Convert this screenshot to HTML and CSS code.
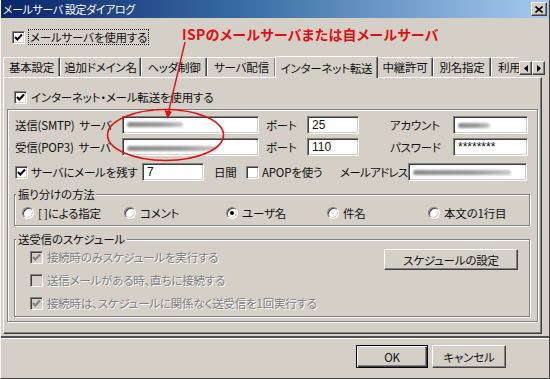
FILE: index.html
```html
<!DOCTYPE html>
<html lang="ja">
<head>
<meta charset="utf-8">
<title>メールサーバ 設定ダイアログ</title>
<link rel="stylesheet" href="styles.css">
</head>
<body>
<div class="window">
  <div class="titlebar">
    <span class="title">メールサーバ 設定ダイアログ</span>
    <span class="close"><svg width="8" height="7" viewBox="0 0 8 7"><path d="M0.5 0.5 L7.5 6.5 M7.5 0.5 L0.5 6.5" stroke="#000" stroke-width="1.6" fill="none"/></svg></span>
  </div>
  <div class="content">
    <div class="check-row top-check">
      <span class="cb"><svg width="9" height="9" viewBox="0 0 9 9"><path d="M1 4 L3.3 6.5 L8 1.5" stroke="#000" stroke-width="2" fill="none"/></svg></span>
      <span class="focus">メールサーバを使用する</span>
    </div>
    <div class="tabs">
      <div class="tab t1">基本設定</div>
      <div class="tab t2">追加ドメイン名</div>
      <div class="tab t3">ヘッダ制御</div>
      <div class="tab t4">サーバ配信</div>
      <div class="tab active">インターネット転送</div>
      <div class="tab t6">中継許可</div>
      <div class="tab t7">別名指定</div>
      <div class="tab t8">利用</div>
      <div class="scroller">
        <span class="arrow"><svg width="4" height="7" viewBox="0 0 4 7"><path d="M4 0 L0 3.5 L4 7 Z" fill="#000"/></svg></span>
        <span class="arrow"><svg width="4" height="7" viewBox="0 0 4 7"><path d="M0 0 L4 3.5 L0 7 Z" fill="#000"/></svg></span>
      </div>
    </div>
    <div class="panel">
      <div class="check-row use-row">
        <span class="cb"><svg width="9" height="9" viewBox="0 0 9 9"><path d="M1 4 L3.3 6.5 L8 1.5" stroke="#000" stroke-width="2" fill="none"/></svg></span>
        <span>インターネット・メール転送を使用する</span>
      </div>
      <div class="frame">
        <div class="row">
          <span class="lbl-server">送信(SMTP)&nbsp; サーバ</span>
          <span class="input w-server"><span class="smudge s1"></span></span>
          <span class="lbl-port">ポート</span>
          <span class="input w-port">25</span>
          <span class="lbl-acct">アカウント</span>
          <span class="input w-acct"><span class="smudge s3"></span></span>
        </div>
        <div class="row row2">
          <span class="lbl-server">受信(POP3)&nbsp; サーバ</span>
          <span class="input w-server"><span class="smudge s2"></span></span>
          <span class="lbl-port">ポート</span>
          <span class="input w-port">110</span>
          <span class="lbl-acct">パスワード</span>
          <span class="input w-acct">********</span>
        </div>
        <div class="row row3">
          <span class="cb"><svg width="9" height="9" viewBox="0 0 9 9"><path d="M1 4 L3.3 6.5 L8 1.5" stroke="#000" stroke-width="2" fill="none"/></svg></span>
          <span class="lbl-keep">サーバにメールを残す</span>
          <span class="input w-days">7</span>
          <span class="lbl-days">日間</span>
          <span class="cb"></span>
          <span class="lbl-apop">APOPを使う</span>
          <span class="lbl-addr">メールアドレス</span>
          <span class="input w-addr"><span class="smudge s4"></span></span>
        </div>
        <fieldset class="group sort">
          <legend>振り分けの方法</legend>
          <div class="radios">
            <span class="radio-item"><span class="radio"></span>[ ]による指定</span>
            <span class="radio-item"><span class="radio"></span>コメント</span>
            <span class="radio-item"><span class="radio on"></span>ユーザ名</span>
            <span class="radio-item"><span class="radio"></span>件名</span>
            <span class="radio-item"><span class="radio"></span>本文の1行目</span>
          </div>
        </fieldset>
        <fieldset class="group sched">
          <legend>送受信のスケジュール</legend>
          <div class="sched-body">
            <div class="sched-list">
              <div class="check-row disabled">
                <span class="cb dis"><svg width="9" height="9" viewBox="0 0 9 9"><path d="M1 4 L3.3 6.5 L8 1.5" stroke="#808080" stroke-width="2" fill="none"/></svg></span>
                <span>接続時のみスケジュールを実行する</span>
              </div>
              <div class="check-row disabled">
                <span class="cb dis"></span>
                <span>送信メールがある時、直ちに接続する</span>
              </div>
              <div class="check-row disabled">
                <span class="cb dis"><svg width="9" height="9" viewBox="0 0 9 9"><path d="M1 4 L3.3 6.5 L8 1.5" stroke="#808080" stroke-width="2" fill="none"/></svg></span>
                <span>接続時は、スケジュールに関係なく送受信を1回実行する</span>
              </div>
            </div>
            <button class="btn sched-btn">スケジュールの設定</button>
          </div>
        </fieldset>
      </div>
    </div>
    <div class="separator"></div>
    <div class="buttons">
      <button class="btn default ok">OK</button>
      <button class="btn cancel">キャンセル</button>
    </div>
  </div>
  <div class="annot">
    <svg class="annot-svg" width="550" height="379" viewBox="0 0 550 379">
      <ellipse cx="165.5" cy="135" rx="58" ry="25.5" fill="none" stroke="#e01010" stroke-width="1.6"/>
      <line x1="185" y1="42" x2="168.5" y2="112" stroke="#e01010" stroke-width="1.4"/>
      <path d="M164.5 110 L172 111.8 L167.5 119 Z" fill="#e01010"/>
    </svg>
    <span class="annot-text">ISPのメールサーバまたは自メールサーバ</span>
  </div>
</div>
</body>
</html>
```

FILE: styles.css
```css
* { box-sizing: border-box; }

body {
  margin: 0;
  background: #d4d0c8;
  font-family: "Noto Sans CJK JP", "Noto Sans", sans-serif;
  font-size: 11.5px;
  line-height: 14px;
  letter-spacing: -0.2px;
  font-feature-settings: "palt";
  color: #111;
  white-space: nowrap;
}

.window {
  position: relative;
  width: 550px;
  height: 379px;
  background: #d4d0c8;
  border-left: 1px solid #f4f4f4;
  border-right: 1px solid #404040;
  border-bottom: 1px solid #404040;
  overflow: hidden;
}

/* title bar */
.titlebar {
  height: 18px;
  display: flex;
  align-items: center;
  justify-content: space-between;
  padding: 0 2px 0 2px;
  background: linear-gradient(to right, #0a246a 0%, #3a6ea5 45%, #a6caf0 100%);
  color: #fff;
}
.title { font-size: 11px; letter-spacing: -0.4px; }
.close {
  width: 16px;
  height: 14px;
  display: flex;
  align-items: center;
  justify-content: center;
  background: #d4d0c8;
  border: 1px solid;
  border-color: #fff #404040 #404040 #fff;
  box-shadow: inset -1px -1px #808080;
}

.content {
  display: flex;
  flex-direction: column;
  padding: 0 7px 0 2px;
}

/* checkbox */
.check-row {
  display: flex;
  align-items: center;
  height: 16px;
  gap: 4px;
}
.cb {
  width: 13px;
  height: 13px;
  flex: none;
  display: flex;
  align-items: center;
  justify-content: center;
  background: #fff;
  border: 1px solid;
  border-color: #808080 #fff #fff #808080;
  box-shadow: inset 1px 1px #404040, inset -1px -1px #d4d0c8;
}
.cb.dis { background: #d4d0c8; }

.top-check {
  margin-top: 11px;
  padding-left: 9px;
  gap: 3px;
}
.focus {
  border: 1px dotted #000;
  padding: 0 1px;
  line-height: 14px;
}

/* tabs */
.tabs {
  margin-top: 10px;
  height: 22px;
  display: flex;
  align-items: flex-end;
}
.tab {
  height: 19px;
  margin-bottom: 1px;
  display: flex;
  align-items: center;
  justify-content: center;
  overflow: hidden;
  border-top: 1px solid #fff;
  border-left: 1px solid #fff;
  border-right: 1px solid #404040;
  box-shadow: inset -1px 0 #808080;
  border-radius: 2px 2px 0 0;
  flex: none;
}
.t1 { width: 57px; }
.t2 { width: 81px; }
.t3 { width: 66px; }
.t4 { width: 69px; }
.t6 { width: 56px; }
.t7 { width: 58px; }
.t8 { width: 28px; justify-content: flex-start; padding-left: 6px; border-right: none; box-shadow: none; }
.tab.active {
  width: 103px;
  height: 22px;
  margin-bottom: -1px;
  position: relative;
  z-index: 2;
  background: #d4d0c8;
  margin-left: -1px;
  margin-right: -1px;
}
.scroller {
  display: flex;
  align-self: flex-start;
  margin-top: 6px;
}
.arrow {
  width: 13px;
  height: 14px;
  display: flex;
  align-items: center;
  justify-content: center;
  border: 1px solid;
  border-color: #fff #404040 #404040 #fff;
  box-shadow: inset -1px -1px #808080;
}

/* panel */
.panel {
  height: 257px;
  border: 1px solid;
  border-color: #fff #404040 #404040 #fff;
  box-shadow: inset -1px -1px #808080;
  padding: 0 3px;
  display: flex;
  flex-direction: column;
}
.use-row {
  margin-top: 11px;
  padding-left: 7px;
  gap: 4px;
}

.frame {
  margin-top: 4px;
  border: 1px solid #808080;
  box-shadow: inset 1px 1px #fff, 1px 1px #fff;
  padding: 6px 0 4px 7px;
}

.row {
  display: flex;
  align-items: center;
  height: 18px;
}
.row2 { margin-top: 4px; }
.row3 { margin-top: 7px; }

.input {
  height: 18px;
  flex: none;
  display: flex;
  align-items: center;
  padding-left: 4px;
  background: #fff;
  border: 1px solid;
  border-color: #808080 #fff #fff #808080;
  box-shadow: inset 1px 1px #404040, inset -1px -1px #d4d0c8;
  font-family: "Liberation Sans", sans-serif;
  font-size: 12px;
  letter-spacing: 0;
}
.lbl-server { width: 107px; flex: none; overflow: hidden; }
.w-server { width: 137px; }
.lbl-port { width: 48px; padding-left: 7px; flex: none; }
.w-port { width: 52px; }
.lbl-acct { width: 94px; padding-left: 31px; flex: none; }
.w-acct { width: 75px; }

.lbl-keep { width: 114px; padding-left: 3px; flex: none; }
.w-days { width: 62px; }
.lbl-days { width: 42px; padding-left: 10px; flex: none; }
.lbl-apop { width: 81px; padding-left: 3px; flex: none; }
.lbl-addr { width: 68px; flex: none; letter-spacing: -0.7px; }
.w-addr { width: 119px; }

.smudge {
  display: block;
  height: 5px;
  border-radius: 3px;
  background: linear-gradient(to right, #8a8a8a, #9a9a9a 60%, #c8c8c8);
  filter: blur(1.2px);
}
.s1 { width: 56px; margin-top: -1px; }
.s2 { width: 90px; margin-top: 2px; }
.s3 { width: 32px; }
.s4 { width: 98px; margin-top: 1px; }

/* group boxes */
.group {
  margin: 0 7px 0 -1px;
  padding: 0;
  border: 1px solid #808080;
  box-shadow: inset 1px 1px #fff, 1px 1px #fff;
  min-width: 0;
}
.group legend {
  margin-left: 1px;
  padding: 0 2px;
  line-height: 14px;
  background: #d4d0c8;
}
.sort { margin-top: 6px; }
.radios {
  display: grid;
  grid-template-columns: 102px 102px 101px 101px auto;
  padding: 5px 0 5px 7px;
  height: 24px;
  align-items: center;
}
.radio-item {
  display: flex;
  align-items: center;
  gap: 4px;
  height: 14px;
}
.radio {
  width: 12px;
  height: 12px;
  flex: none;
  border-radius: 50%;
  background: #fff;
  border: 1px solid;
  border-color: #808080 #fff #fff #808080;
  box-shadow: inset 1px 1px #404040, inset -1px -1px #d4d0c8;
  display: flex;
  align-items: center;
  justify-content: center;
}
.radio.on::after {
  content: "";
  width: 4px;
  height: 4px;
  border-radius: 50%;
  background: #000;
}

.sched { margin-top: 6px; }
.sched-body {
  display: flex;
  justify-content: space-between;
  align-items: flex-start;
  padding: 3px 11px 5px 15px;
}
.sched-list {
  display: flex;
  flex-direction: column;
  gap: 7px;
}
.disabled {
  color: #808080;
  text-shadow: 1px 1px 0 #fff;
  gap: 4px;
}

/* buttons */
.btn {
  font-family: "Noto Sans CJK JP", "Noto Sans", sans-serif;
  font-feature-settings: "palt";
  font-size: 11.5px;
  letter-spacing: -0.2px;
  line-height: 14px;
  color: #111;
  background: #d4d0c8;
  border: 1px solid;
  border-color: #fff #404040 #404040 #fff;
  box-shadow: inset -1px -1px #808080;
  padding: 0;
  margin: 0;
}
.sched-btn {
  width: 134px;
  height: 21px;
}
.separator {
  margin: 2px -7px 0 -3px;
  background: #505050;
  border-bottom: 1px solid #fff;
  height: 3px;
}
.buttons {
  display: flex;
  justify-content: flex-end;
  gap: 4px;
  margin-top: 6px;
  padding-right: 36px;
}
.ok { width: 72px; height: 23px; }
.cancel { width: 74px; height: 23px; }
.btn.default {
  border: 1px solid #000;
  box-shadow: inset 1px 1px #fff, inset -1px -1px #404040, inset -2px -2px #808080;
}

/* annotation */
.annot {
  position: absolute;
  top: 0;
  left: -1px;
  width: 550px;
  height: 379px;
  pointer-events: none;
}
.annot-svg { position: absolute; top: 0; left: 0; }
.annot-text {
  position: absolute;
  left: 182px;
  top: 25px;
  color: #e01010;
  font-weight: bold;
  font-size: 14px;
  line-height: 18px;
  letter-spacing: 0.3px;
}
```
